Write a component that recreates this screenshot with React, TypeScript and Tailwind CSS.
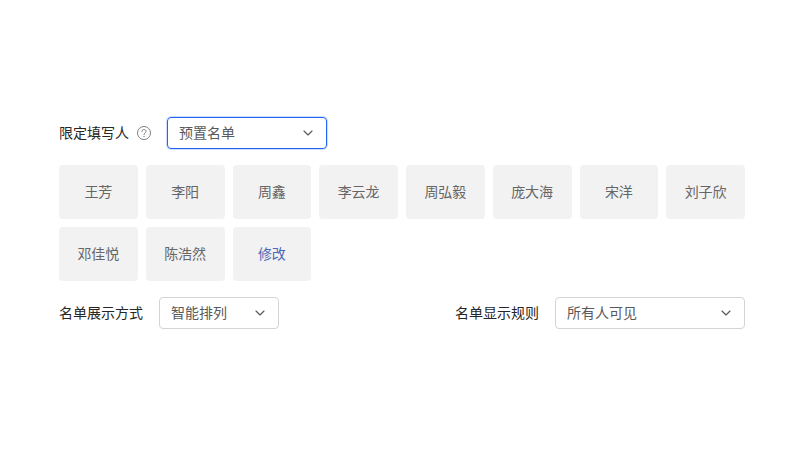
import React from 'react';
import { ChevronDown } from 'lucide-react';

const names = ['王芳', '李阳', '周鑫', '李云龙', '周弘毅', '庞大海', '宋洋', '刘子欣', '邓佳悦', '陈浩然'];

function Select({ value, width, active }: { value: string; width: string; active?: boolean }) {
    return (
        <div
            className={`flex h-8 items-center justify-between rounded border pl-[11px] pr-[10px] text-sm text-[#595959] ${width} ${
                active ? 'border-[#1f66f5] shadow-[0_0_0_1px_rgba(31,102,245,0.22)]' : 'border-[#d4d4d4]'
            }`}
        >
            <span>{value}</span>
            <ChevronDown className="h-4 w-4 text-[#595959]" strokeWidth={1.75} />
        </div>
    );
}

function HelpIcon() {
    return (
        <svg width="14" height="14" viewBox="0 0 14 14" fill="none" className="text-[#808080]">
            <circle cx="7" cy="7" r="6.5" stroke="currentColor" strokeWidth="1" />
            <path
                d="M4.9 5.5C4.9 4.3 5.8 3.5 7 3.5C8.2 3.5 9.1 4.3 9.1 5.4C9.1 6.8 7 7 7 8.6"
                stroke="currentColor"
                strokeWidth="1"
                strokeLinecap="round"
            />
            <circle cx="7" cy="10.4" r="0.7" fill="currentColor" />
        </svg>
    );
}

export default function App() {
    return (
        <div className="h-[450px] w-[800px] bg-white px-[59px] pr-[55px] pt-[117px] font-['Inter','Noto_Sans_CJK_SC',sans-serif] text-sm">
            {/* top row */}
            <div className="flex items-center">
                <span className="text-[#262626]">限定填写人</span>
                <span className="ml-2 mr-4 flex"><HelpIcon /></span>
                <Select value="预置名单" width="w-40" active />
            </div>

            {/* names */}
            <div className="mt-4 grid grid-cols-8 gap-2">
                {names.map((name) => (
                    <div key={name} className="flex h-[54px] items-center justify-center rounded bg-[#f2f2f2] text-[#666666]">
                        {name}
                    </div>
                ))}
                <div className="flex h-[54px] items-center justify-center rounded bg-[#f2f2f2] text-[#4a68b8]">修改</div>
            </div>

            {/* bottom row */}
            <div className="mt-4 flex items-center justify-between">
                <div className="flex items-center gap-4">
                    <span className="text-[#262626]">名单展示方式</span>
                    <Select value="智能排列" width="w-[120px]" />
                </div>
                <div className="flex items-center gap-4">
                    <span className="text-[#262626]">名单显示规则</span>
                    <Select value="所有人可见" width="w-[190px]" />
                </div>
            </div>
        </div>
    );
}
